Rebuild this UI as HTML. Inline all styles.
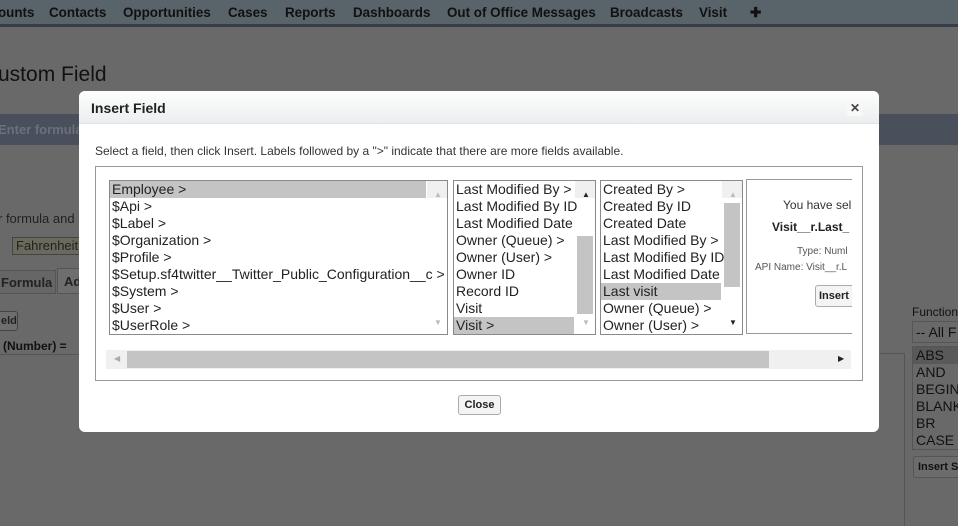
<!DOCTYPE html>
<html><head><meta charset="utf-8"><style>
*{margin:0;padding:0;box-sizing:border-box}
body{width:958px;height:526px;overflow:hidden;background:#696969;font-family:"Liberation Sans",Arial,sans-serif;position:relative}
.abs{position:absolute}
.nav{left:0;top:0;width:958px;height:27px;background:#59636a;border-bottom:3px solid #383c48}
.nav span{position:absolute;top:5px;font-size:13.4px;font-weight:bold;color:#111;white-space:nowrap}
.list{position:absolute;background:#fff;border:1px solid #8a8a8a;font-size:14px;color:#222;overflow:hidden}
.list div{height:17px;line-height:16px;padding-left:2px;white-space:nowrap}
.sel{background:#c4c4c4}
.sb{position:absolute;top:0;right:0;width:20px;height:100%;background:#f0f0f0}
</style></head><body>
<div class="abs nav">
<span style="left:-2px">ounts</span><span style="left:49px">Contacts</span><span style="left:123px">Opportunities</span><span style="left:228px">Cases</span><span style="left:285px">Reports</span><span style="left:353px">Dashboards</span><span style="left:447px">Out of Office Messages</span><span style="left:610px">Broadcasts</span><span style="left:699px">Visit</span><span style="left:750px">✚</span>
</div>
<div class="abs" style="left:-2px;top:63px;font-size:21px;color:#111">ustom Field</div>
<div class="abs" style="left:0;top:114px;width:958px;height:31px;background:#4a4f5c"></div>
<div class="abs" style="left:-2px;top:122px;font-size:13px;font-weight:bold;color:#6a7080">Enter formula</div>
<div class="abs" style="left:-2px;top:211px;font-size:13px;color:#222">r formula and</div>
<div class="abs" style="left:12px;top:237px;width:70px;height:18px;border:1px solid #444;background:#6a6a5c;font-size:13px;color:#222;padding-left:3px;white-space:nowrap;overflow:hidden">Fahrenheit</div>
<div class="abs" style="left:-2px;top:270px;width:58px;height:24px;background:#666;border:1px solid #555;border-left:0;font-size:13px;font-weight:bold;color:#222;padding:4px 3px">Formula</div>
<div class="abs" style="left:57px;top:268px;width:30px;height:26px;background:#6e6e6e;border:1px solid #555;font-size:13px;font-weight:bold;color:#222;padding:5px 6px">Ad</div>
<div class="abs" style="left:-4px;top:311px;width:22px;height:20px;background:#6e6e6e;border:1px solid #444;border-radius:3px;font-size:11px;font-weight:bold;color:#222;padding:3px 0 0 4px">eld</div>
<div class="abs" style="left:3px;top:339px;font-size:12px;font-weight:bold;color:#111">(Number) =</div>
<div class="abs" style="left:0;top:354px;width:79px;height:1px;background:#555"></div>
<div class="abs" style="left:904px;top:353px;width:1px;height:173px;background:#555"></div>
<div class="abs" style="left:880px;top:353px;width:24px;height:1px;background:#555"></div>
<div class="abs" style="left:912px;top:305px;font-size:12px;color:#111">Function</div>
<div class="abs" style="left:912px;top:321px;width:50px;height:22px;border:1px solid #555;font-size:14px;color:#111;padding:2px 3px;white-space:nowrap">-- All F</div>
<div class="abs" style="left:912px;top:346px;width:50px;height:104px;border:1px solid #555;font-size:14px;color:#111;line-height:17px">
<div style="background:#595959;padding-left:3px">ABS</div><div style="padding-left:3px">AND</div><div style="padding-left:3px">BEGIN</div><div style="padding-left:3px">BLANK</div><div style="padding-left:3px">BR</div><div style="padding-left:3px">CASE</div></div>
<div class="abs" style="left:913px;top:456px;width:50px;height:22px;border:1px solid #555;border-radius:3px;background:#6c6c6c;font-size:11px;font-weight:bold;color:#111;padding:4px 4px;white-space:nowrap;overflow:hidden">Insert S</div>

<div class="abs" style="left:79px;top:91px;width:800px;height:341px;background:#fff;border-radius:6px;overflow:hidden">
<div style="height:33px;background:linear-gradient(#fdfefe,#eceeef);border-bottom:1px solid #dfe3e5;position:relative">
<div class="abs" style="left:12px;top:9px;font-size:14px;font-weight:bold;color:#222">Insert Field</div>
<div class="abs" style="left:768px;top:9px;width:16px;height:16px;background:#f8f8f8;font-size:12px;font-weight:bold;color:#444;text-align:center;line-height:16px">✕</div>
</div>
<div class="abs" style="left:16px;top:53px;font-size:12px;color:#333">Select a field, then click Insert. Labels followed by a "&gt;" indicate that there are more fields available.</div>
<div class="abs" style="left:16px;top:75px;width:768px;height:215px;border:1px solid #999"></div>
<div class="list" style="left:30px;top:89px;width:339px;height:155px">
<div class="sel" style="width:316px">Employee &gt;</div><div>$Api &gt;</div><div>$Label &gt;</div><div>$Organization &gt;</div><div>$Profile &gt;</div><div>$Setup.sf4twitter__Twitter_Public_Configuration__c &gt;</div><div>$System &gt;</div><div>$User &gt;</div><div>$UserRole &gt;</div>
<div class="sb"><div class="abs" style="left:5px;top:6px;font-size:8px;color:#bbb">▲</div><div class="abs" style="left:5px;top:134px;font-size:8px;color:#bbb">▼</div></div>
</div>
<div class="list" style="left:374px;top:89px;width:143px;height:155px">
<div>Last Modified By &gt;</div><div>Last Modified By ID</div><div>Last Modified Date</div><div>Owner (Queue) &gt;</div><div>Owner (User) &gt;</div><div>Owner ID</div><div>Record ID</div><div>Visit</div><div class="sel" style="width:120px">Visit &gt;</div>
<div class="sb"><div class="abs" style="left:5px;top:6px;font-size:8px;color:#222">▲</div><div class="abs" style="left:2px;top:55px;width:16px;height:78px;background:#c4c4c4"></div><div class="abs" style="left:5px;top:134px;font-size:8px;color:#bbb">▼</div></div>
</div>
<div class="list" style="left:521px;top:89px;width:143px;height:155px">
<div>Created By &gt;</div><div>Created By ID</div><div>Created Date</div><div>Last Modified By &gt;</div><div>Last Modified By ID</div><div>Last Modified Date</div><div class="sel" style="width:120px">Last visit</div><div>Owner (Queue) &gt;</div><div>Owner (User) &gt;</div>
<div class="sb"><div class="abs" style="left:5px;top:6px;font-size:8px;color:#bbb">▲</div><div class="abs" style="left:2px;top:22px;width:16px;height:84px;background:#c4c4c4"></div><div class="abs" style="left:5px;top:134px;font-size:8px;color:#222">▼</div></div>
</div>
<div class="abs" style="left:667px;top:88px;width:106px;height:155px;border:1px solid #999;border-right:0;overflow:hidden">
<div class="abs" style="left:36px;top:18px;font-size:12px;color:#333;white-space:nowrap">You have sel</div>
<div class="abs" style="left:25px;top:40px;font-size:12px;font-weight:bold;color:#222;white-space:nowrap">Visit__r.Last_</div>
<div class="abs" style="left:50px;top:66px;font-size:10px;color:#555;white-space:nowrap">Type: Numl</div>
<div class="abs" style="left:8px;top:82px;font-size:10px;color:#555;white-space:nowrap">API Name: Visit__r.L</div>
<div class="abs" style="left:68px;top:105px;width:40px;height:22px;border:1px solid #aaa;border-radius:3px;background:#f4f4f4;font-size:11px;font-weight:bold;color:#222;padding:4px 3px">Insert</div>
</div>
<div class="abs" style="left:27px;top:259px;width:745px;height:19px;background:#f0f0f0">
<div class="abs" style="left:8px;top:4px;font-size:8px;color:#aaa">◀</div>
<div class="abs" style="left:21px;top:1px;width:642px;height:17px;background:#c4c4c4"></div>
<div class="abs" style="left:732px;top:4px;font-size:8px;color:#222">▶</div>
</div>
<div class="abs" style="left:379px;top:304px;width:43px;height:20px;border:1px solid #aaa;border-radius:3px;background:#f4f4f4;font-size:11px;font-weight:bold;color:#222;text-align:center;line-height:18px">Close</div>
</div>
</body></html>
